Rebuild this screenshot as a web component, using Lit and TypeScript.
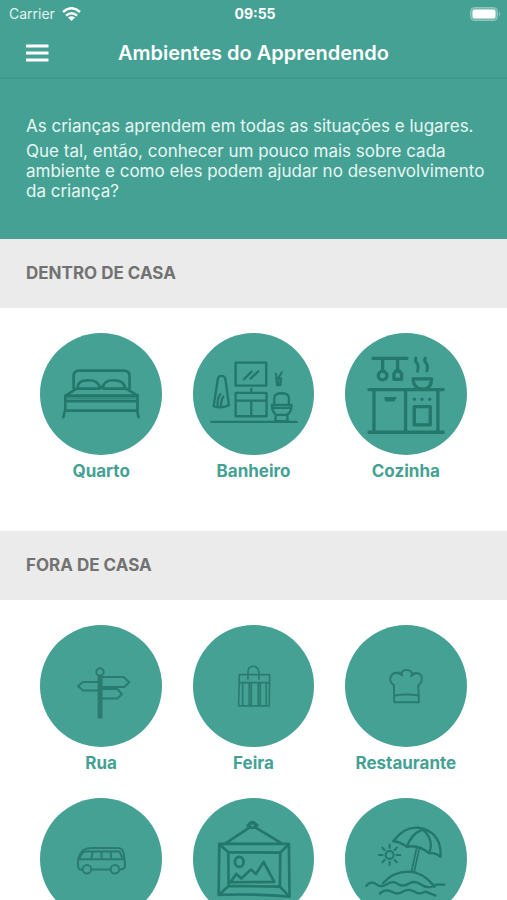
import { LitElement, html, svg, css, nothing, SVGTemplateResult } from "lit";
import { customElement, property } from "lit/decorators.js";

interface Place {
  name: string;
  captioned: boolean;
  viewBox: string;
  tone: "strong" | "light";
  art: SVGTemplateResult;
}

const indoor: Place[] = [
  {
    name: "Quarto",
    captioned: true,
    viewBox: "31 21 366 366",
    tone: "strong",
    art: svg`<g stroke-width="8">
      <path d="M132 188V150Q132 134 150 134H282Q300 134 300 150V188"/>
      <path d="M144 186Q144 163 176 163Q206 163 210 184M220 184Q224 163 250 163Q284 163 286 186"/>
      <path d="M141 188L108 209M290 188L324 209M140 188H210L217 183L222 188H290"/>
      <path d="M107 209H324V254H107ZM107 226H324M107 250L101 274M322 250L327 274" />
      <path d="M110 217H320" opacity=".5"/>
    </g>`,
  },
  {
    name: "Banheiro",
    captioned: true,
    viewBox: "33 21 366 366",
    tone: "strong",
    art: svg`<g stroke-width="7">
      <rect x="161" y="110" width="92" height="69"/>
      <path d="M186 160L209 137M206 158L229 136" />
      <path d="M161 201H254V271H161ZM161 224H254M208 224V271M208 189V201"/>
      <path d="M88 288H344"/>
      <path d="M107 163Q108 149 119 150Q130 150 131 164L141 238Q117 249 95 241ZM107 241Q105 218 115 205M117 243Q117 222 124 212"/>
      <path d="M277 238V216Q278 202 298 202Q321 202 321 216V238M270 237H329Q329 258 316 266L317 286H280L282 266Q270 257 270 237ZM274 246H326M283 267H315"/>
      <path d="M283 157H298L296 178H285ZM284 155L282 143M290 155L300 139M290 158V176" stroke-width="6"/>
    </g>`,
  },
  {
    name: "Cozinha",
    captioned: true,
    viewBox: "31 21 366 366",
    tone: "strong",
    art: svg`<g stroke-width="10">
      <path d="M115 97H217M144 97V134M189 97V134"/>
      <circle cx="144" cy="149" r="13"/>
      <path d="M178 143L183 136H195L201 143V160H178Z"/>
      <path d="M244 96Q240 104 247 112Q253 118 249 136M272 96Q267 104 275 112Q281 120 277 135" stroke-width="9"/>
      <path d="M235 159H291Q290 186 271 189H256Q237 184 235 159ZM103 191H326M118 193V318M213 193V318M310 193V318M103 319H326"/>
      <rect x="239" y="242" width="48" height="55"/>
      <path d="M152 217H182M154 223H178" stroke-width="7"/>
      <path d="M239 220h1M262 220h1M285 220h1" stroke-width="9"/>
    </g>`,
  },
];

const outdoor: Place[] = [
  {
    name: "Rua",
    captioned: true,
    viewBox: "31 28 366 366",
    tone: "light",
    art: svg`<g stroke-width="6">
      <circle cx="211" cy="169" r="11"/>
      <path d="M207 181V306H216V181ZM212 184V303"/>
      <path d="M217 184H282L299 200L284 214H217M206 199H160L145 211L160 225H206M217 220H263L277 236L263 249H217"/>
    </g>`,
  },
  {
    name: "Feira",
    captioned: true,
    viewBox: "33 28 366 366",
    tone: "light",
    art: svg`<g stroke-width="5">
      <path d="M172 177H263L262 271H170ZM172 201H262"/>
      <path d="M198 191V169Q199 152 214 152Q230 153 231 171V191"/>
      <path d="M182 202V270M202 202V270M208 202V270M229 202V270M235 202V270M253 202V270"/>
    </g>`,
  },
  {
    name: "Restaurante",
    captioned: true,
    viewBox: "31 28 366 366",
    tone: "light",
    art: svg`<g stroke-width="6">
      <path d="M179 260L178 209Q165 200 167 187Q172 170 190 172L199 177Q202 162 217 163Q232 164 233 178Q250 166 260 180Q266 198 251 210L253 260Z"/>
      <path d="M180 240Q214 234 252 240M194 171Q201 172 203 180M240 172Q231 175 230 182"/>
    </g>`,
  },
  {
    name: "Transporte",
    captioned: false,
    viewBox: "31 22 366 366",
    tone: "light",
    art: svg`<g stroke-width="6">
      <path d="M158 237Q145 239 145 223Q143 198 159 180Q168 172 190 172H265Q280 173 282 187L286 215V229Q282 238 270 237M186 237H243"/>
      <path d="M149 206H283M150 205Q153 189 165 183H270L279 203M189 184L185 206M216 183V205M243 183L245 205"/>
      <circle cx="172" cy="236" r="13"/><circle cx="256" cy="236" r="13"/>
    </g>`,
  },
  {
    name: "Museu",
    captioned: false,
    viewBox: "33 22 366 366",
    tone: "strong",
    art: svg`<g stroke-width="8">
      <circle cx="211" cy="103" r="9"/>
      <path d="M197 105Q210 91 226 104M202 111L133 157M220 110L297 157"/>
      <path d="M112 160H321L323 318Q216 309 110 313ZM139 185L295 186L294 288L140 286ZM112 160L139 185M321 160L295 186M110 313L140 286M323 318L294 288"/>
      <ellipse cx="172" cy="214" rx="13" ry="15"/>
      <path d="M145 275L163 250L178 264L207 237L222 250L245 214L277 274Z"/>
    </g>`,
  },
  {
    name: "Praia",
    captioned: false,
    viewBox: "31 22 366 366",
    tone: "strong",
    art: svg`<g stroke-width="7">
      <path d="M176 152Q214 100 265 114Q322 132 318 199Q303 185 284 188Q250 160 217 169Q197 153 176 152ZM263 117Q228 132 217 169M265 117Q299 146 284 188"/>
      <path d="M246 173L231 241M254 175L239 242" stroke-width="5"/>
      <path d="M145 278Q176 243 221 243Q266 244 300 289"/>
      <path d="M95 286Q105 271 122 279Q139 293 157 281Q174 269 190 280Q207 291 224 278Q242 269 258 281Q275 294 293 288L306 282L330 282"/>
      <path d="M135 309Q153 294 170 303Q189 315 207 302Q222 293 239 303Q254 314 273 303L303 315"/>
      <circle cx="165" cy="193" r="12" stroke-width="6"/>
      <path d="M165 162v10M165 214v10M133 193h11M186 193h11M143 171l7 7M187 171l-7 7M143 215l7-7M187 215l-7-7" stroke-width="6"/>
    </g>`,
  },
];

@customElement("place-card")
class PlaceCard extends LitElement {
  @property({ attribute: false }) place?: Place;

  static styles = css`
    :host {
      display: block;
    }
    .card {
      display: flex;
      flex-direction: column;
      align-items: center;
      gap: 6px;
      width: 100%;
      margin: 0;
      padding: 0 0 25px;
      border: 0;
      background: none;
      color: #45a193;
      font: 700 17px/20px Inter, "Liberation Sans", sans-serif;
      cursor: pointer;
    }
    .disc {
      display: block;
      width: 80%;
      aspect-ratio: 1;
      border-radius: 50%;
      background: #45a193;
      fill: none;
      stroke-linecap: round;
      stroke-linejoin: round;
    }
    .strong {
      stroke: #23776b;
    }
    .light {
      stroke: #2b7b70;
    }
  `;

  render() {
    const place = this.place;
    if (!place) return nothing;
    return html`<button class="card" type="button" aria-label=${place.name}>
      <svg class="disc ${place.tone}" viewBox=${place.viewBox} aria-hidden="true">${place.art}</svg>
      ${place.captioned ? html`<span>${place.name}</span>` : nothing}
    </button>`;
  }
}

@customElement("app-root")
class AppRoot extends LitElement {
  static styles = css`
    :host {
      display: flex;
      flex-direction: column;
      height: 100vh;
      background: #fff;
      font-family: Inter, "Liberation Sans", sans-serif;
    }
    .top {
      flex: none;
      background: #45a193;
      color: #fff;
      border-bottom: 2px solid #3f9a8c;
    }
    .status {
      display: grid;
      grid-template-columns: 1fr auto 1fr;
      align-items: center;
      height: 28px;
      padding: 0 6px 0 9px;
      font-size: 14px;
      line-height: 20px;
    }
    .carrier {
      display: flex;
      align-items: center;
      gap: 7px;
      color: #e2f3f0;
    }
    .time {
      font-weight: 700;
    }
    .battery {
      justify-self: end;
    }
    .bar {
      display: grid;
      grid-template-columns: 26px 1fr 26px;
      align-items: center;
      height: 49px;
      padding: 0 25px;
    }
    .menu {
      display: flex;
      padding: 0;
      border: 0;
      background: none;
      cursor: pointer;
    }
    .title {
      margin: 0;
      text-align: center;
      font-size: 20px;
      font-weight: 600;
      line-height: 28px;
      white-space: nowrap;
    }
    .content {
      flex: 1;
      min-height: 0;
      overflow-y: auto;
      scrollbar-width: none;
    }
    .intro {
      padding: 37px 16px 38px 26px;
      background: #45a193;
      color: #e6f7f4;
      font-size: 17px;
      line-height: 20px;
    }
    .intro p {
      margin: 0;
    }
    .intro p + p {
      margin-top: 5px;
    }
    .heading {
      margin: 0;
      padding: 24px 26px;
      background: #ebebeb;
      color: #727272;
      font-size: 17px;
      font-weight: 700;
      line-height: 21px;
    }
    .grid {
      display: grid;
      grid-template-columns: repeat(3, 1fr);
      padding: 25px;
    }
  `;

  private section(title: string, places: Place[]) {
    return html`<section>
      <h2 class="heading">${title}</h2>
      <div class="grid">
        ${places.map((place) => html`<place-card .place=${place}></place-card>`)}
      </div>
    </section>`;
  }

  render() {
    return html`
      <header class="top">
        <div class="status">
          <span class="carrier">
            Carrier
            <svg width="19" height="15" viewBox="0 0 38 30" fill="none" stroke="#fff" stroke-width="5" aria-hidden="true">
              <path d="M2 10Q19 -5 36 10M8 17Q19 8 30 17" />
              <path d="M12 21Q19 16 26 21L19 28Z" fill="#fff" stroke="none" />
            </svg>
          </span>
          <span class="time">09:55</span>
          <svg class="battery" width="31" height="14" viewBox="0 0 62 28" aria-hidden="true">
            <rect x="1" y="1" width="54" height="26" rx="8" fill="#73b9ae" stroke="#8fc7be" stroke-width="2" />
            <rect x="5" y="5" width="46" height="18" rx="4" fill="#fff" />
            <path d="M58 9Q62 14 58 19Z" fill="#8fc7be" />
          </svg>
        </div>
        <div class="bar">
          <button class="menu" type="button" aria-label="Menu">
            <svg width="24" height="18" viewBox="0 0 48 36" fill="#fff" aria-hidden="true">
              <path d="M2 1h45v6H2zM2 15h45v6H2zM2 29h45v6H2z" />
            </svg>
          </button>
          <h1 class="title">Ambientes do Apprendendo</h1>
        </div>
      </header>
      <main class="content">
        <div class="intro">
          <p>As crianças aprendem em todas as situações e lugares.</p>
          <p>
            Que tal, então, conhecer um pouco mais sobre cada ambiente e como eles podem ajudar no
            desenvolvimento da criança?
          </p>
        </div>
        ${this.section("DENTRO DE CASA", indoor)} ${this.section("FORA DE CASA", outdoor)}
      </main>
    `;
  }
}
